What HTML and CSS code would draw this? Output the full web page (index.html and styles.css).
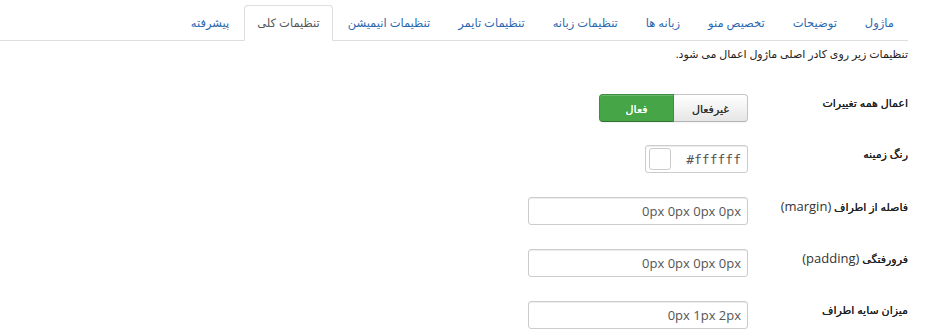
FILE: index.html
```html
<!DOCTYPE html>
<html lang="fa" dir="rtl">
<head>
<meta charset="utf-8">
<title>تنظیمات کلی</title>
<link rel="stylesheet" href="styles.css">
</head>
<body>
<div class="wrap">
  <ul class="tabs">
    <li class="tab"><a>ماژول</a></li>
    <li class="tab"><a>توضیحات</a></li>
    <li class="tab"><a>تخصیص منو</a></li>
    <li class="tab"><a>زبانه ها</a></li>
    <li class="tab"><a>تنظیمات زبانه</a></li>
    <li class="tab"><a>تنظیمات تایمر</a></li>
    <li class="tab"><a>تنظیمات انیمیشن</a></li>
    <li class="tab active"><a>تنظیمات کلی</a></li>
    <li class="tab"><a>پیشرفته</a></li>
  </ul>
  <div class="pane">
    <p class="desc">تنظیمات زیر روی کادر اصلی ماژول اعمال می شود.</p>
    <div class="row">
      <div class="label">اعمال همه تغییرات</div>
      <div class="controls">
        <div class="btn-group">
          <span class="btn">غیرفعال</span>
          <span class="btn btn-on">فعال</span>
        </div>
      </div>
    </div>
    <div class="row">
      <div class="label">رنگ زمینه</div>
      <div class="controls">
        <div class="color-input">
          <span class="value" dir="ltr">#ffffff</span>
          <span class="swatch"></span>
        </div>
      </div>
    </div>
    <div class="row">
      <div class="label">فاصله از اطراف <span class="en">(margin)</span></div>
      <div class="controls"><div class="text-input" dir="ltr">0px 0px 0px 0px</div></div>
    </div>
    <div class="row">
      <div class="label">فرورفتگی <span class="en">(padding)</span></div>
      <div class="controls"><div class="text-input" dir="ltr">0px 0px 0px 0px</div></div>
    </div>
    <div class="row">
      <div class="label">میزان سایه اطراف</div>
      <div class="controls"><div class="text-input" dir="ltr">0px 1px 2px</div></div>
    </div>
  </div>
</div>
</body>
</html>
```

FILE: styles.css
```css
html, body {
  margin: 0;
  padding: 0;
  background: #fff;
}
body {
  font-family: "Open Sans", "DejaVu Sans", sans-serif;
  font-size: 11px;
  color: #333;
}
.wrap {
  margin-right: 20px;
}
.tabs {
  list-style: none;
  margin: 0;
  padding: 5px 1px 0 0;
  display: flex;
  border-bottom: 1px solid #ddd;
}
.tab {
  margin-left: 2px;
  margin-bottom: -1px;
}
.tab a {
  display: block;
  padding: 8px 12px;
  line-height: 18px;
  font-size: 11.5px;
  color: #2b68b0;
  border: 1px solid transparent;
  border-radius: 4px 4px 0 0;
}
.tab.active a {
  color: #555;
  background: #fff;
  border-color: #ddd #ddd transparent #ddd;
}
.pane {
  padding-top: 4px;
}
.desc {
  margin: 0 0 31px;
  line-height: 18px;
  font-size: 11px;
  color: #222;
}
.row {
  display: flex;
  margin-bottom: 24px;
  height: 28px;
}
.row:first-of-type {
  margin-bottom: 23px;
}
.label {
  width: 160px;
  padding-top: 0;
  font-size: 11px;
  line-height: 18px;
  color: #222;
  text-shadow: 0 0 0.4px #222;
}
.en {
  font-size: 13px;
  text-shadow: none;
  color: #333;
}
.controls {
  display: flex;
}
.btn-group {
  display: flex;
}
.btn {
  box-sizing: border-box;
  width: 75px;
  height: 28px;
  display: flex;
  align-items: center;
  justify-content: center;
  font-size: 11px;
  color: #333;
  text-shadow: 0 0 0.4px #333;
  border: 1px solid #c5c5c5;
  border-bottom-color: #b3b3b3;
  background: linear-gradient(#fff, #e6e6e6);
  box-shadow: inset 0 1px 0 rgba(255,255,255,.2), 0 1px 2px rgba(0,0,0,.05);
}
.btn:first-child {
  border-radius: 0 4px 4px 0;
}
.btn-on {
  color: #fff;
  text-shadow: 0 0 0.4px #fff;
  background: #46a546;
  border-color: #3d8f3d #3d8f3d #2f702f;
  border-radius: 4px 0 0 4px;
  margin-right: -1px;
}
.color-input {
  box-sizing: border-box;
  width: 103px;
  height: 28px;
  display: flex;
  align-items: center;
  justify-content: space-between;
  padding: 0 6px 0 3px;
  border: 1px solid #ccc;
  border-radius: 3px;
  box-shadow: inset 0 1px 1px rgba(0,0,0,.075);
}
.value {
  font-family: "DejaVu Sans Mono", monospace;
  font-size: 13px;
  color: #555;
}
.swatch {
  width: 20px;
  height: 20px;
  border: 1px solid #ccc;
  border-radius: 3px;
  background: #fff;
}
.text-input {
  box-sizing: border-box;
  width: 220px;
  height: 28px;
  padding: 4px 6px;
  line-height: 18px;
  text-align: right;
  font-family: "Open Sans", sans-serif;
  font-size: 13px;
  color: #555;
  border: 1px solid #ccc;
  border-radius: 3px;
  box-shadow: inset 0 1px 1px rgba(0,0,0,.075);
}
```
